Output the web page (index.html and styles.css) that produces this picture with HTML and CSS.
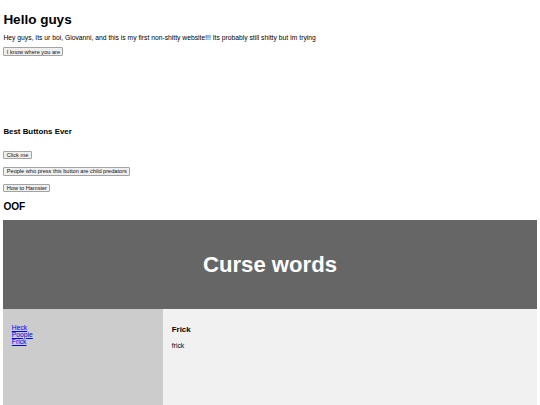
FILE: index.html
```html
<!DOCTYPE html>
<html lang="en">
<head>
<meta charset="utf-8">
<title>Hello guys</title>
<link rel="stylesheet" href="styles.css">
</head>
<body>
  <h1 class="title">Hello guys</h1>
  <p class="intro">Hey guys, Its ur boi, Giovanni, and this is my first non-shitty website!!! Its probably still shitty but Im trying</p>
  <div class="intro-actions"><button class="btn" type="button">I know where you are</button></div>
  <div class="spacer"></div>
  <h3 class="section-title">Best Buttons Ever</h3>
  <div class="button-list">
    <button class="btn" type="button">Click me</button>
    <button class="btn" type="button">People who press this button are child predators</button>
    <button class="btn" type="button">How to Hamster</button>
  </div>
  <h2 class="oof">OOF</h2>
  <header class="banner">
    <h2 class="banner-title">Curse words</h2>
  </header>
  <section class="layout">
    <nav class="sidebar">
      <ul class="nav-list">
        <li><a href="#">Heck</a></li>
        <li><a href="#">Poopie</a></li>
        <li><a href="#">Frick</a></li>
      </ul>
    </nav>
    <article class="content">
      <h3 class="content-title">Frick</h3>
      <p class="content-text">frick</p>
    </article>
  </section>
</body>
</html>
```

FILE: styles.css
```css
* {
  box-sizing: border-box;
}

html {
  background: #ffffff;
}

body {
  margin: 3.375px;
  font-family: "Liberation Sans", Arial, sans-serif;
  font-size: 6.75px;
  color: #000000;
}

.title {
  font-size: 13.5px;
  font-weight: bold;
  margin: 8.4px 0 7.3px;
}

.intro {
  margin: 6.75px 0 6.2px;
}

.intro-actions {
  line-height: 1;
}

.btn {
  font-family: "Liberation Sans", Arial, sans-serif;
  font-size: 5.625px;
  line-height: 6.4px;
  color: #111111;
  background: #efefef;
  border: 1px solid #a3a3a3;
  border-radius: 1px;
  padding: 0.3px 2.4px;
  height: 8.6px;
  margin: 0;
  cursor: pointer;
}

.spacer {
  height: 63.2px;
}

.section-title {
  font-size: 7.9px;
  font-weight: bold;
  margin: 7.9px 0 0;
}

.button-list {
  display: flex;
  flex-direction: column;
  align-items: flex-start;
  gap: 7.85px;
  margin-top: 14.8px;
}

.oof {
  font-size: 10.125px;
  font-weight: bold;
  margin: 8.9px 0 8.4px;
}

.banner {
  background: #666666;
  color: #ffffff;
  text-align: center;
  padding: 12.66px;
}

.banner-title {
  font-size: 22.15px;
  font-weight: bold;
  margin: 18.4px 0;
}

.layout {
  display: flex;
}

.sidebar {
  width: 30%;
  height: 126.6px;
  padding: 8.44px;
  background: #cccccc;
}

.nav-list {
  list-style: none;
  padding: 0;
  margin: 6.75px 0;
}

.nav-list a {
  color: #0000ee;
  text-decoration: underline;
}

.content {
  width: 70%;
  height: 126.6px;
  padding: 8.44px;
  background: #f1f1f1;
}

.content-title {
  font-size: 7.9px;
  font-weight: bold;
  margin: 7.9px 0;
}

.content-text {
  margin: 6.75px 0;
}
```
